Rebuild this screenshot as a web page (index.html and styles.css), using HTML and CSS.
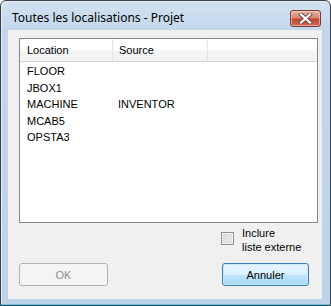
FILE: index.html
```html
<!DOCTYPE html>
<html lang="fr">
<head>
<meta charset="utf-8">
<title>Toutes les localisations - Projet</title>
<link rel="stylesheet" href="styles.css">
</head>
<body>
<div class="window">
  <div class="titlebar">
    <span class="title">Toutes les localisations - Projet</span>
    <button class="close" aria-label="Fermer">
      <svg width="15" height="11" viewBox="0 0 15 11">
        <path d="M3 1.5 L12 9.5 M12 1.5 L3 9.5" stroke="#6b4a44" stroke-width="4" stroke-linecap="square" fill="none"/>
        <path d="M3 1.5 L12 9.5 M12 1.5 L3 9.5" stroke="#ffffff" stroke-width="2.2" stroke-linecap="square" fill="none"/>
      </svg>
    </button>
  </div>
  <div class="client">
    <div class="listbox">
      <div class="header">
        <div class="col c1">Location</div>
        <div class="col c2">Source</div>
        <div class="col c3"></div>
      </div>
      <div class="rows">
        <div class="row"><span class="cell c1">FLOOR</span><span class="cell c2"></span></div>
        <div class="row"><span class="cell c1">JBOX1</span><span class="cell c2"></span></div>
        <div class="row"><span class="cell c1">MACHINE</span><span class="cell c2">INVENTOR</span></div>
        <div class="row"><span class="cell c1">MCAB5</span><span class="cell c2"></span></div>
        <div class="row"><span class="cell c1">OPSTA3</span><span class="cell c2"></span></div>
      </div>
    </div>
    <div class="option">
      <span class="checkbox"></span>
      <span class="label">Inclure<br>liste externe</span>
    </div>
    <div class="buttons">
      <button class="btn disabled">OK</button>
      <button class="btn focused">Annuler</button>
    </div>
  </div>
</div>
</body>
</html>
```
FILE: styles.css
```css
html, body {
  margin: 0;
  padding: 0;
  background: #ffffff;
}
body {
  width: 331px;
  height: 306px;
  font-family: "Liberation Sans", Arial, sans-serif;
  font-size: 11px;
  color: #000;
}
.window {
  box-sizing: border-box;
  width: 331px;
  height: 306px;
  border: 1px solid #3a4048;
  border-radius: 6px 6px 0 0;
  background: linear-gradient(180deg, #d3e2f2 0px, #c3d7ec 30px, #bcd3eb 100%);
  box-shadow: inset 0 -1px 0 #5fc8e4, inset 1px 1px 0 #e3edf8;
  padding: 0 8px 6px 7px;
  display: flex;
  flex-direction: column;
}
.titlebar {
  height: 29px;
  display: flex;
  align-items: flex-start;
  justify-content: space-between;
}
.title {
  font-family: "Noto Sans", "Liberation Sans", sans-serif;
  font-size: 12px;
  line-height: 16px;
  margin-top: 9px;
  margin-left: 4px;
  color: #000;
}
.close {
  box-sizing: border-box;
  width: 31px;
  height: 17px;
  margin-top: 9px;
  margin-right: 1px;
  padding: 0;
  border: 1px solid #7a3a30;
  border-radius: 3px;
  background: linear-gradient(180deg, #eab3a5 0%, #d98572 45%, #c4462f 55%, #cc6a55 100%);
  box-shadow: inset 0 0 0 1px rgba(255, 220, 210, 0.55);
  display: flex;
  align-items: center;
  justify-content: center;
}
.client {
  flex: 1;
  background: #f0f0f0;
  padding: 8px 4px 0 11px;
  display: flex;
  flex-direction: column;
}
.listbox {
  box-sizing: border-box;
  width: 299px;
  height: 185px;
  border: 1px solid #828790;
  background: #ffffff;
}
.header {
  display: flex;
  height: 22px;
  border-bottom: 1px solid #d5d5d5;
  background: linear-gradient(180deg, #ffffff 0%, #ffffff 40%, #f3f4f6 60%, #f1f2f4 100%);
}
.col {
  box-sizing: border-box;
  line-height: 22px;
  border-right: 1px solid #e3e5e8;
}
.header .c1 { width: 93px; padding-left: 7px; }
.header .c2 { width: 95px; padding-left: 6px; }
.header .c3 { flex: 1; border-right: none; }
.rows {
  padding-top: 1px;
}
.row {
  display: flex;
  height: 16.5px;
  line-height: 17px;
}
.cell.c1 { box-sizing: border-box; width: 93px; padding-left: 7px; }
.cell.c2 { box-sizing: border-box; width: 95px; padding-left: 5px; }
.option {
  display: flex;
  align-items: flex-start;
  margin-top: 3px;
  padding-left: 202px;
}
.checkbox {
  box-sizing: border-box;
  width: 13px;
  height: 13px;
  margin-top: 6px;
  border: 1px solid #8f8f8f;
  background: linear-gradient(135deg, #d0d3d7 0%, #f3f3f3 100%);
  box-shadow: inset 0 0 0 1px #f4f4f4, inset 0 0 0 2px #dadcdf;
}
.label {
  margin-left: 8px;
  line-height: 14px;
}
.buttons {
  display: flex;
  justify-content: space-between;
  margin-top: 9px;
  width: 290px;
}
.btn {
  box-sizing: border-box;
  width: 89px;
  height: 23px;
  padding: 0;
  border-radius: 3px;
  font-family: "Liberation Sans", Arial, sans-serif;
  font-size: 11px;
}
.btn.disabled {
  border: 1px solid #adb2b5;
  background: #f4f4f4;
  color: #8d8d8d;
}
.btn.focused {
  width: 87px;
  border: 1px solid #3c7fb1;
  background: linear-gradient(180deg, #eaf6fd 0%, #d9f0fc 50%, #bee6fd 50%, #a7d9f5 100%);
  box-shadow: inset 0 0 0 1px #c8ecfd;
  color: #000;
}
```
